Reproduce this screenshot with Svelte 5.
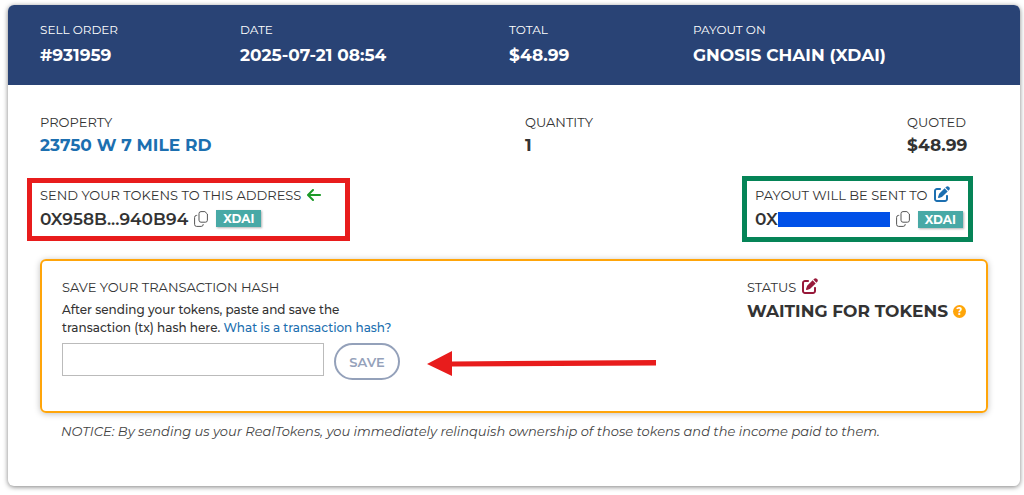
<script lang="ts">
	const order = [
		{label: 'Sell order', value: '#931959'},
		{label: 'Date', value: '2025-07-21 08:54'},
		{label: 'Total', value: '$48.99'},
		{label: 'Payout on', value: 'Gnosis Chain (xDai)'},
	];

	let hash = $state('');
</script>

{#snippet editIcon()}
	<svg class="edit" viewBox="0 0 512 512" aria-hidden="true">
		<path d="M471.6 21.7c-21.9-21.9-57.3-21.9-79.2 0L362.3 51.7l97.9 97.9 30.1-30.1c21.9-21.9 21.9-57.3 0-79.2L471.6 21.7zm-299.2 220c-6.1 6.1-10.8 13.6-13.5 21.9l-29.6 88.8c-2.9 8.6-.6 18.1 5.8 24.6s15.9 8.7 24.6 5.8l88.8-29.6c8.2-2.7 15.7-7.4 21.9-13.5L437.7 172.3 339.7 74.3 172.4 241.7zM96 64C43 64 0 107 0 160V416c0 53 43 96 96 96H352c53 0 96-43 96-96V320c0-17.7-14.3-32-32-32s-32 14.3-32 32v96c0 17.7-14.3 32-32 32H96c-17.7 0-32-14.3-32-32V160c0-17.7 14.3-32 32-32h96c17.7 0 32-14.3 32-32s-14.3-32-32-32H96z" />
	</svg>
{/snippet}

{#snippet copyButton()}
	<button type="button" class="icon copy" aria-label="Copy address">
		<svg viewBox="0 0 14 16" aria-hidden="true">
			<path d="M7 .6h3.9l2.5 2.4v6.2a2 2 0 0 1-2 2H7a2 2 0 0 1-2-2V2.6a2 2 0 0 1 2-2z" />
			<path d="M3.2 4.4H2.6a2 2 0 0 0-2 2v7a2 2 0 0 0 2 2h4.6a2 2 0 0 0 2-2v-.4" />
		</svg>
	</button>
{/snippet}

<main class="card">
	<header>
		{#each order as item}
			<div>
				<div class="label">{item.label}</div>
				<div class="value">{item.value}</div>
			</div>
		{/each}
	</header>

	<div class="body">
		<div class="property">
			<div>
				<div class="label">Property</div>
				<div class="value"><a href="#property">23750 W 7 Mile Rd</a></div>
			</div>
			<div>
				<div class="label">Quantity</div>
				<div class="value">1</div>
			</div>
			<div>
				<div class="label">Quoted</div>
				<div class="value">$48.99</div>
			</div>
		</div>

		<div class="addresses">
			<div class="mark send">
				<div class="label">
					Send your tokens to this address
					<svg class="arrow" viewBox="0 0 448 512" aria-hidden="true">
						<path d="M9.4 233.4c-12.5 12.5-12.5 32.8 0 45.3l160 160c12.5 12.5 32.8 12.5 45.3 0s12.5-32.8 0-45.3L109.2 288 416 288c17.7 0 32-14.3 32-32s-14.3-32-32-32l-306.7 0L214.6 118.6c12.5-12.5 12.5-32.8 0-45.3s-32.8-12.5-45.3 0l-160 160z" />
					</svg>
				</div>
				<div class="value address">
					0x958b...940b94
					{@render copyButton()}
					<span class="chain">xDai</span>
				</div>
			</div>
			<div class="mark payout">
				<div class="label">
					Payout will be sent to
					<button type="button" class="icon" aria-label="Edit payout address">{@render editIcon()}</button>
				</div>
				<div class="value address">
					<span class="hidden">0x<span class="redacted"></span></span>
					{@render copyButton()}
					<span class="chain">xDai</span>
				</div>
			</div>
		</div>

		<section class="transaction">
			<form onsubmit={(e) => e.preventDefault()}>
				<label class="label" for="hash">Save your transaction hash</label>
				<p>
					After sending your tokens, paste and save the<br />
					transaction (tx) hash here. <a href="#help">What is a transaction hash?</a>
				</p>
				<div class="save">
					<input id="hash" type="text" bind:value={hash} />
					<button type="submit">Save</button>
					<svg class="pointer" viewBox="0 0 230 25" aria-hidden="true">
						<path d="M0 13 25 0v10.5L229 9v5.5L25 15.5V25z" />
					</svg>
				</div>
			</form>
			<div class="status">
				<div class="label">
					Status
					<button type="button" class="icon red" aria-label="Edit status">{@render editIcon()}</button>
				</div>
				<div class="value">Waiting for tokens <span class="help">?</span></div>
			</div>
		</section>

		<p class="notice">
			NOTICE: By sending us your RealTokens, you immediately relinquish ownership of those tokens and the income paid to them.
		</p>
	</div>
</main>

<style>
	:global(body) {
		background: #fff;
		color: #333;
		font-family: Montserrat, Inter, sans-serif;
	}

	.card {
		margin: 5px 4px 9px 8px;
		border-radius: 6px;
		overflow: hidden;
		background: #fff;
		box-shadow: 0 1px 5px rgba(0, 0, 0, 0.5);
	}

	header {
		display: grid;
		grid-template-columns: 200fr 269fr 184fr 295fr;
		padding: 17px 32px 20px;
		background: #294375;
		color: #fff;
	}

	.label {
		display: flex;
		align-items: center;
		height: 16px;
		font-size: 13px;
		line-height: 16px;
		text-transform: uppercase;
		white-space: nowrap;
	}
	.value {
		display: flex;
		align-items: center;
		margin-top: 6px;
		font-size: 17px;
		font-weight: 700;
		line-height: 20px;
		text-transform: uppercase;
		white-space: nowrap;
	}
	header .label {
		font-size: 12px;
	}
	header .value {
		margin-top: 7px;
	}

	a {
		color: #1c6fb0;
		text-decoration: none;
	}

	.body {
		padding: 29px 32px 47px;
	}
	.property {
		display: grid;
		grid-template-columns: 485fr 382fr 81fr;
	}
	.property .value {
		margin-top: 5px;
	}

	.addresses {
		display: flex;
		align-items: center;
		justify-content: space-between;
		margin: 21px 15px 17px -13px;
	}
	.mark {
		border: 5px solid;
	}
	.mark .label,
	.mark .value {
		color: #333;
	}
	.send {
		padding: 4px 24px 7px 8px;
		border-color: #e81c1c;
	}
	.payout {
		padding: 6px 5px 8px 8px;
		border-color: #058457;
	}
	.address {
		font-weight: 600;
	}
	.hidden {
		display: flex;
		align-items: center;
	}
	.redacted {
		width: 112px;
		height: 15px;
		background: #0050e8;
	}
	.chain {
		margin-left: 8px;
		padding: 0 7px;
		background: #48a9a6;
		box-shadow: 1px 1px 2px rgba(0, 0, 0, 0.3);
		color: #fff;
		font-size: 12px;
		font-weight: 700;
		line-height: 17px;
	}

	.icon {
		display: flex;
		margin-left: 6px;
		padding: 0;
		border: 0;
		background: none;
		color: #1c6fb0;
		cursor: pointer;
	}
	.red {
		color: #98193a;
	}
	.edit {
		width: 16px;
		height: 16px;
		margin-bottom: 2px;
		fill: currentColor;
	}
	.arrow {
		width: 14px;
		height: 16px;
		margin-left: 6px;
		fill: #1c9a28;
	}
	.copy svg {
		width: 14px;
		height: 16px;
		fill: none;
		stroke: #555;
	}

	.transaction {
		display: grid;
		grid-template-columns: 685fr 219fr;
		padding: 18px 20px 31px;
		border: 2px solid #ffa50a;
		border-radius: 6px;
		box-shadow: 0 1px 6px rgba(0, 0, 0, 0.25);
	}
	.transaction p {
		margin: 6px 0;
		font-size: 12px;
		font-weight: 500;
		line-height: 18px;
	}
	.save {
		display: flex;
		align-items: flex-start;
	}
	.save input {
		box-sizing: border-box;
		width: 262px;
		height: 33px;
		padding: 0 8px;
		border: 1px solid #bbb;
		font: inherit;
		font-size: 13px;
	}
	.save button {
		width: 66px;
		height: 37px;
		margin-left: 10px;
		padding: 0;
		border: 2px solid #94a1ba;
		border-radius: 19px;
		background: #fff;
		color: #94a1ba;
		font: inherit;
		font-size: 13px;
		font-weight: 600;
		text-transform: uppercase;
	}
	.pointer {
		width: 230px;
		height: 25px;
		margin: 8px 0 0 27px;
		fill: #e81c1c;
	}
	.help {
		display: flex;
		align-items: center;
		justify-content: center;
		width: 13px;
		height: 13px;
		margin-left: 5px;
		border-radius: 50%;
		background: #ffa50a;
		color: #fff;
		font-size: 10px;
		line-height: 13px;
	}

	.notice {
		margin: 10px 0 0 21px;
		color: #444;
		font-size: 13px;
		font-style: italic;
		line-height: 16px;
	}
</style>
